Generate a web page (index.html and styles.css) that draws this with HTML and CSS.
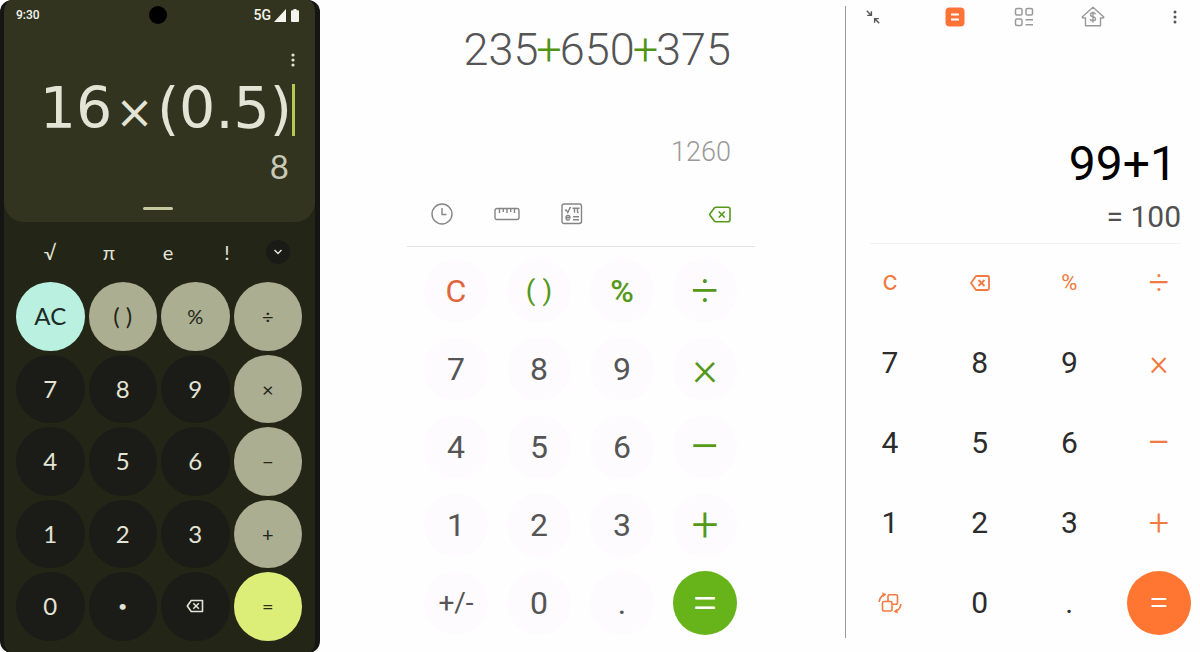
FILE: index.html
```html
<!DOCTYPE html>
<html lang="en">
<head>
<meta charset="utf-8">
<meta name="viewport" content="width=device-width, initial-scale=1">
<title>Calculators</title>
<link rel="stylesheet" href="styles.css">
</head>
<body>
<main class="gallery">

  <section class="pixel" aria-label="Dark calculator">
    <div class="pixel-display">
      <div class="status">
        <span>9:30</span>
        <span class="camera"></span>
        <span class="signals">5G
          <svg width="12" height="13" viewBox="0 0 12 13" aria-hidden="true"><path d="M12 0v13H0z" fill="currentColor"/></svg>
          <svg class="battery" width="8" height="13" viewBox="0 0 8 13" aria-hidden="true"><path d="M2.5 0h3v1.3H7a1 1 0 0 1 1 1V12a1 1 0 0 1-1 1H1a1 1 0 0 1-1-1V2.300a1 1 0 0 1 1-1h1.500z" fill="currentColor"/></svg>
        </span>
      </div>
      <button class="pixel-more" aria-label="More options">
        <svg width="4" height="14" viewBox="0 0 4 14"><g fill="currentColor"><circle cx="2" cy="2" r="1.600"/><circle cx="2" cy="7" r="1.600"/><circle cx="2" cy="12" r="1.600"/></g></svg>
      </button>
      <div class="pixel-expression"><span>16<span class="times">×</span>(0.5)</span><span class="cursor"></span></div>
      <output class="pixel-result">8</output>
      <div class="handle"></div>
    </div>
    <div class="science">
      <button>√</button><button>π</button><button>e</button><button>!</button>
      <button class="expand" aria-label="Expand"><svg width="10" height="6" viewBox="0 0 10 6"><path d="M1.500 1l3.500 3.500L8.500 1" fill="none" stroke="currentColor" stroke-width="1.500"/></svg></button>
    </div>
    <div class="pixel-keys">
      <button class="clear">AC</button><button class="tone">( )</button><button class="tone op">%</button><button class="tone op">÷</button>
      <button>7</button><button>8</button><button>9</button><button class="tone op">×</button>
      <button>4</button><button>5</button><button>6</button><button class="tone op">−</button>
      <button>1</button><button>2</button><button>3</button><button class="tone op">+</button>
      <button>0</button><button class="point">•</button>
      <button aria-label="Backspace"><svg width="18" height="14" viewBox="0 0 18 14" fill="none" stroke="currentColor" stroke-width="1.600"><path d="M5.200 1.500H16.500v11H5.200L1.300 7z" stroke-linejoin="round"/><path d="M7.300 4.200l5.600 5.600m0-5.600L7.300 9.800"/></svg></button>
      <button class="equals op">=</button>
    </div>
  </section>

  <section class="galaxy" aria-label="Green calculator">
    <div class="galaxy-expression">235<span class="plus">+</span>650<span class="plus">+</span>375</div>
    <output class="galaxy-result">1260</output>
    <div class="tools">
      <button aria-label="History"><svg width="22" height="22" viewBox="0 0 22 22" fill="none" stroke="currentColor" stroke-width="1.400"><circle cx="11" cy="11" r="10"/><path d="M11 5v6.500h4.500"/></svg></button>
      <button aria-label="Unit converter"><svg width="26" height="14" viewBox="0 0 26 14" fill="none" stroke="currentColor" stroke-width="1.400"><rect x="1" y="1.500" width="24" height="11" rx="2"/><path d="M5.500 2v4M9.300 2v3M13 2v4M16.700 2v3M20.500 2v4"/></svg></button>
      <button aria-label="Scientific mode"><svg width="22" height="22" viewBox="0 0 22 22" fill="none" stroke="currentColor" stroke-width="1.400"><rect x="1" y="1" width="19.500" height="19.500" rx="2"/><path d="M4 7.500l1.300-.5 1.500 2.500L9 4.700h1M11.500 5.200h7M13.500 5.200v4.500M16.500 5.200v3.500q0 1 1.200.8M5 14.800h4c0-3-4-3-4 0s2.800 2.500 3.800 1.500M12 13.700h6M12 16.700h6"/></svg></button>
      <button class="erase" aria-label="Backspace"><svg width="22" height="17" viewBox="0 0 22 17" fill="none" stroke="currentColor" stroke-width="1.600"><path d="M7 1.200h12a2 2 0 0 1 2 2v10.500a2 2 0 0 1-2 2H7q-1 0-1.700-.8L1.200 9.500q-.7-1 0-2L5.300 2Q6 1.200 7 1.200z"/><path d="M9.700 5.500l6 6m0-6l-6 6"/></svg></button>
    </div>
    <div class="galaxy-keys">
      <button class="clear">C</button><button class="green parens">( )</button><button class="green percent">%</button><button class="green op">÷</button>
      <button>7</button><button>8</button><button>9</button><button class="green op">×</button>
      <button>4</button><button>5</button><button>6</button><button class="green op minus">−</button>
      <button>1</button><button>2</button><button>3</button><button class="green op">+</button>
      <button class="sign">+/-</button><button>0</button><button>.</button><button class="equals op">=</button>
    </div>
  </section>

  <section class="mi" aria-label="Orange calculator">
    <nav class="mi-bar">
      <button aria-label="Shrink window"><svg width="14" height="14" viewBox="0 0 14 14" fill="none" stroke="currentColor" stroke-width="1.400"><path d="M.8.800l4.400 4.400M5.400 1.200v4.200H1.200M13.200 13.200L8.800 8.800M8.600 12.800V8.600h4.200"/></svg></button>
      <div class="mi-modes">
        <button class="active" aria-label="Calculator"><svg width="20" height="20" viewBox="0 0 20 20"><rect x=".5" y=".5" width="19" height="19" rx="4" fill="currentColor"/><path d="M6 7.500h8M6 12.500h8" stroke="#fff" stroke-width="1.800"/></svg></button>
        <button aria-label="Converter"><svg width="20" height="20" viewBox="0 0 20 20" fill="none" stroke="currentColor" stroke-width="1.500"><rect x="1.500" y="1.500" width="6.500" height="6.500" rx="1.500"/><rect x="12" y="1.500" width="6.500" height="6.500" rx="1.500"/><rect x="1.500" y="12" width="6.500" height="6.500" rx="1.500"/><path d="M11.500 12.800h7.500M11.500 17.800h7.500"/></svg></button>
        <button aria-label="Mortgage"><svg width="24" height="21" viewBox="0 0 24 21" fill="none" stroke="currentColor" stroke-width="1.400" stroke-linejoin="round"><path d="M12 1.200L22.800 11q.2 1-1.300 1h-2v7.800h-15V12h-2q-1.500 0-1.300-1z"/><path d="M14.600 8.200q-.6-1.400-2.600-1.400-2.500 0-2.500 1.900 0 1.500 2.500 2t2.600 2.100q0 1.900-2.600 1.900t-2.700-1.600M12 5.400v11"/></svg></button>
      </div>
      <button aria-label="More options"><svg width="14" height="14" viewBox="0 0 14 14" fill="currentColor"><circle cx="7" cy="2" r="1.500"/><circle cx="7" cy="7" r="1.500"/><circle cx="7" cy="12" r="1.500"/></svg></button>
    </nav>
    <div class="mi-display">
      <div class="mi-expression">99+1</div>
      <output class="mi-result">= 100</output>
    </div>
    <div class="mi-keys">
      <button class="orange letter">C</button>
      <button class="orange" aria-label="Backspace"><svg width="20" height="16" viewBox="0 0 20 16" fill="none" stroke="currentColor" stroke-width="1.800" stroke-linejoin="round"><path d="M6 1h11.500a1.500 1.500 0 0 1 1.500 1.500v11a1.500 1.500 0 0 1-1.500 1.500H6L1 8z"/><path d="M8.500 5l6 6m0-6l-6 6"/></svg></button>
      <button class="orange percent">%</button><button class="orange op">÷</button>
      <button>7</button><button>8</button><button>9</button><button class="orange op">×</button>
      <button>4</button><button>5</button><button>6</button><button class="orange op minus">−</button>
      <button>1</button><button>2</button><button>3</button><button class="orange op">+</button>
      <button class="orange" aria-label="Rotate layout"><svg width="24" height="22" viewBox="0 0 24 22" fill="none" stroke="currentColor" stroke-width="1.600"><rect x="4.500" y="9.500" width="9.500" height="9.500" rx="1.500"/><path d="M10 9V4.300a1.500 1.500 0 0 1 1.500-1.500h6.500a1.500 1.500 0 0 1 1.500 1.500v6.500a1.500 1.500 0 0 1-1.500 1.500h-3.500M1.200 10q.3-5 4.800-7.200M22.800 12q-.3 5-4.800 7.200"/><path d="M4 .5l4.500 1.700L5.200 5zM20 21.500l-4.500-1.700 3.300-2.800z" fill="currentColor" stroke="none"/></svg></button>
      <button>0</button><button>.</button><button class="equals op">=</button>
    </div>
  </section>

</main>
</body>
</html>
```
FILE: styles.css
```css
* { box-sizing: border-box; }

body {
  margin: 0;
  background: #fefefe;
  font-family: Roboto, "Liberation Sans", sans-serif;
}

button {
  display: flex;
  align-items: center;
  justify-content: center;
  margin: 0;
  padding: 0;
  border: 0;
  background: none;
  color: inherit;
  font: inherit;
  cursor: pointer;
}

svg { display: block; }
output { display: block; }

.gallery {
  display: grid;
  grid-template-columns: 320fr 435fr 445fr;
  align-items: start;
}

/* Dark calculator */
.pixel {
  overflow: hidden;
  border: solid #151614;
  border-width: 0 5px 0 4px;
  border-radius: 12px;
  background: #232517;
  color: #e3e4d6;
  font-family: Lato, sans-serif;
}

.pixel-display {
  display: flex;
  flex-direction: column;
  height: 222px;
  padding: 6px 16px 0 12px;
  border-radius: 0 0 20px 20px;
  background: #32341f;
}

.status {
  display: grid;
  grid-template-columns: 1fr auto 1fr;
  align-items: center;
  color: #f4f4ee;
  font: 500 12px/18px Roboto, sans-serif;
}

.camera {
  width: 18px;
  height: 18px;
  border-radius: 50%;
  background: #000;
}

.signals {
  display: flex;
  align-items: center;
  justify-content: flex-end;
  gap: 3px;
  font-size: 14px;
}

.battery { margin-left: 2px; }

.pixel-more {
  align-self: flex-end;
  width: 12px;
  margin: 29px 0 0;
}

.pixel-expression {
  display: flex;
  align-items: center;
  justify-content: flex-end;
  height: 52px;
  margin-top: 17px;
  padding-right: 4px;
  font: 57px/52px "DejaVu Sans", sans-serif;
}

.times {
  padding: 0 3px;
  font-size: 46px;
}

.cursor {
  width: 3px;
  height: 52px;
  background: #b5c94f;
}

.pixel-result {
  margin-top: 14px;
  padding-right: 10px;
  color: #c8c9b6;
  font-size: 33px;
  line-height: 32px;
  text-align: right;
}

.handle {
  width: 30px;
  height: 3px;
  margin: 25px auto 0;
  border-radius: 2px;
  background: #c5c89f;
}

.science {
  display: grid;
  grid-template-columns: repeat(4, 1fr) 24px;
  column-gap: 19px;
  align-items: center;
  padding: 18px 25px 18px 26px;
  font-size: 20px;
  line-height: 24px;
}

.expand {
  width: 24px;
  height: 24px;
  border-radius: 50%;
  background: #1a1b17;
}

.pixel-keys {
  display: grid;
  grid-template-columns: repeat(4, 1fr);
  gap: 4px;
  padding: 0 13px 12px 12px;
  font-size: 24px;
  line-height: 1;
}

.pixel-keys button {
  aspect-ratio: 1;
  border-radius: 50%;
  background: #1b1c17;
}

.pixel-keys .tone { background: #abae91; color: #23251a; }
.pixel-keys .clear { background: #baf0df; color: #1d2b27; }
.pixel-keys .equals { background: #dcee77; color: #2b2f14; }
.pixel-keys .op { font-size: 20px; }
.pixel-keys .point { font-size: 16px; }

/* Green calculator */
.galaxy {
  padding: 24px 0 0 87px;
  color: #555;
}

.galaxy-expression,
.galaxy-result {
  padding-right: 24px;
  font-weight: 300;
  text-align: right;
}

.galaxy-expression {
  font-size: 45px;
  line-height: 52px;
}

.plus {
  margin: 0 -2px;
  color: #4f9413;
}

.galaxy-result {
  margin-top: 60px;
  color: #999;
  font-size: 27px;
  line-height: 32px;
}

.tools {
  display: flex;
  align-items: center;
  gap: 41px;
  margin-top: 35px;
  padding: 0 24px 21px;
  border-bottom: 1px solid #e3e3e1;
  color: #858585;
}

.tools .erase {
  margin-left: auto;
  color: #55981a;
}

.galaxy-keys {
  display: grid;
  grid-template-columns: repeat(4, 64px);
  justify-content: space-between;
  gap: 14px 0;
  padding: 12px 18px 0 17px;
  font-size: 32px;
  line-height: 1;
}

.galaxy-keys button {
  height: 64px;
  border-radius: 50%;
  background: #fdfbfe;
}

.galaxy-keys .clear { color: #e0663f; }
.galaxy-keys .green { color: #55981a; }
.galaxy-keys .parens { font-size: 28px; }
.galaxy-keys .percent { font-weight: 500; }
.galaxy-keys .sign { font-size: 28px; }
.galaxy-keys .op { font-size: 48px; font-weight: 300; }
.galaxy-keys .minus { font-size: 56px; }
.galaxy-keys .equals { background: #67b31a; color: #fff; }

/* Orange calculator */
.mi {
  height: 632px;
  margin: 6px 0 0 90px;
  border-left: 1px solid #999;
  color: #2c2c2c;
}

.mi-bar {
  display: flex;
  justify-content: space-between;
  align-items: center;
  height: 21px;
  padding: 0 18px 0 20px;
  color: #555;
}

.mi-modes {
  display: grid;
  grid-template-columns: repeat(3, 24px);
  column-gap: 45px;
  color: #999;
}

.mi-modes .active { color: #ff7436; }

.mi-display {
  margin: 107px 19px 0 24px;
  padding-bottom: 10px;
  border-bottom: 1px solid #f1f1f1;
  text-align: right;
}

.mi-expression {
  padding-right: 4px;
  color: #000;
  font-size: 48px;
  line-height: 60px;
}

.mi-result {
  margin-top: 7px;
  color: #505050;
  font-size: 30px;
  line-height: 32px;
}

.mi-keys {
  display: grid;
  grid-template-columns: repeat(4, 64px);
  justify-content: space-between;
  gap: 16px 0;
  padding: 7px 9px 0 12px;
  font-size: 30px;
  line-height: 1;
}

.mi-keys button {
  height: 64px;
  border-radius: 50%;
}

.mi-keys .orange { color: #f07a40; }
.mi-keys .letter { font-family: Inter, sans-serif; font-size: 20px; font-weight: 500; }
.mi-keys .percent { font-size: 22px; }
.mi-keys .op { font-size: 36px; font-weight: 300; }
.mi-keys .minus { font-size: 42px; }
.mi-keys .equals { background: #ff7632; color: #fff; }
```
